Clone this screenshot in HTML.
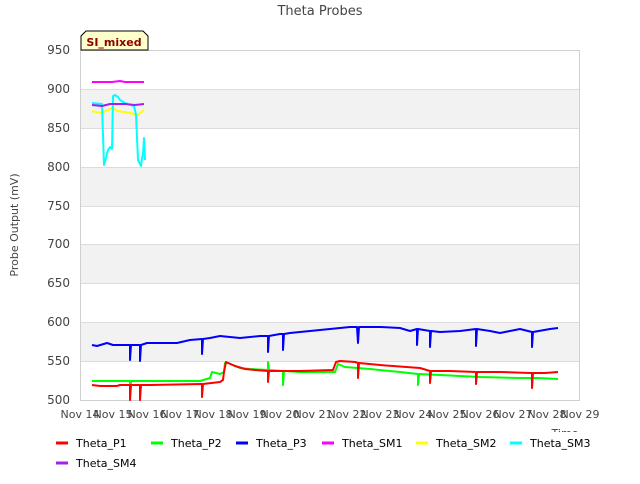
<!DOCTYPE html>
<html><head><meta charset="utf-8"><style>
body{margin:0;background:#fff;width:640px;height:480px;overflow:hidden;font-family:"DejaVu Sans","Liberation Sans",sans-serif;}
</style></head><body>
<svg width="640" height="480" xmlns="http://www.w3.org/2000/svg" font-family="DejaVu Sans, Liberation Sans, sans-serif">
<rect x="80" y="50" width="500" height="350" fill="#fff"/>
<rect x="80" y="89" width="500" height="39" fill="#f2f2f2"/>
<rect x="80" y="167" width="500" height="39" fill="#f2f2f2"/>
<rect x="80" y="244" width="500" height="39" fill="#f2f2f2"/>
<rect x="80" y="322" width="500" height="39" fill="#f2f2f2"/>
<g stroke="#dcdcdc" stroke-width="1">
<line x1="80" y1="89.5" x2="580" y2="89.5"/><line x1="80" y1="128.5" x2="580" y2="128.5"/>
<line x1="80" y1="167.5" x2="580" y2="167.5"/><line x1="80" y1="206.5" x2="580" y2="206.5"/>
<line x1="80" y1="244.5" x2="580" y2="244.5"/><line x1="80" y1="283.5" x2="580" y2="283.5"/>
<line x1="80" y1="322.5" x2="580" y2="322.5"/><line x1="80" y1="361.5" x2="580" y2="361.5"/>
</g>
<rect x="80.5" y="50.5" width="499" height="350" fill="none" stroke="#d0d0d0"/>
<text x="320" y="15" text-anchor="middle" font-size="13" fill="#444">Theta Probes</text>
<g font-size="12" fill="#444" text-anchor="end">
<text x="70" y="54">950</text><text x="70" y="93">900</text><text x="70" y="132">850</text><text x="70" y="171">800</text><text x="70" y="210">750</text><text x="70" y="248">700</text><text x="70" y="287">650</text><text x="70" y="326">600</text><text x="70" y="365">550</text><text x="70" y="404">500</text>
</g>
<text transform="translate(18,225) rotate(-90)" text-anchor="middle" font-size="11" fill="#444">Probe Output (mV)</text>
<g font-size="11" fill="#444" text-anchor="middle">
<text x="80" y="418">Nov 14</text><text x="113" y="418">Nov 15</text><text x="147" y="418">Nov 16</text><text x="180" y="418">Nov 17</text><text x="213" y="418">Nov 18</text><text x="247" y="418">Nov 19</text><text x="280" y="418">Nov 20</text><text x="313" y="418">Nov 21</text><text x="347" y="418">Nov 22</text><text x="380" y="418">Nov 23</text><text x="413" y="418">Nov 24</text><text x="447" y="418">Nov 25</text><text x="480" y="418">Nov 26</text><text x="513" y="418">Nov 27</text><text x="547" y="418">Nov 28</text><text x="580" y="418">Nov 29</text>
</g>
<text x="565" y="437" text-anchor="middle" font-size="11" fill="#444">Time</text>
<rect x="0" y="432" width="640" height="48" fill="#fff"/>
<g fill="none" stroke-width="2" stroke-linejoin="round">
<polyline stroke="#ff00ff" points="92,82 112,82 120,81 125,82 144,82"/>
<polyline stroke="#ffff00" points="92,111 100,113 106,111 112,108 118,111 130,113 138,115 144,110"/>
<polyline stroke="#00ffff" points="92,103 102,104 104,165 106,158 108,150 110,147 112,149 113,96 115,95 118,97 120,100 125,103 134,106 136,115 138,160 140,164 141,166 142,158 143,154 144,138 145,160"/>
<polyline stroke="#a020f0" points="92,105 102,106 110,104 125,104 135,105 144,104"/>
<polyline stroke="#0000ff" points="92,345 97,346 107,343 113,345 130,345 130,360 131,345 140,345 140,361 141,345 147,343 177,343 190,340 202,339 202,354 203,339 210,338 220,336 240,338 260,336 268,336 268,352 269,336 280,334 283,334 283,350 284,334 290,333 320,330 340,328 350,327 357,327 358,343 359,327 380,327 400,328 410,331 417,329 417,345 418,329 430,331 430,347 431,331 440,332 460,331 476,329 476,346 477,329 490,331 500,333 510,331 520,329 532,332 532,347 533,332 550,329 558,328"/>
<polyline stroke="#00ff00" points="92,381 130,381 130,396 131,381 200,381 210,378 212,372 220,374 224,372 225,363 228,363 240,368 250,369 268,370 268,362 269,370 283,371 283,385 284,371 300,372 335,372 338,364 345,367 370,369 400,372 418,374 418,385 419,374 440,375 480,377 520,378 538,378 558,379"/>
<polyline stroke="#ff0000" points="92,385 100,386 117,386 120,385 130,385 130,400 131,385 140,385 140,400 141,385 150,385 202,384 202,397 203,384 220,382 223,380 224,372 226,362 235,366 245,369 255,370 268,371 268,382 269,371 300,371 333,370 336,362 340,361 355,362 358,363 358,378 359,363 380,365 420,368 430,371 430,383 431,371 450,371 476,372 476,384 477,372 500,372 530,373 532,373 532,388 533,373 545,373 558,372"/>
</g>
<path d="M81,50 L81,36 L86,31 L143,31 L148,36 L148,50 Z" fill="#ffffcc" stroke="#000" stroke-width="1"/>
<text x="114" y="46" text-anchor="middle" font-size="11" font-weight="bold" fill="#8b0000">SI_mixed</text>
<g stroke-width="3">
<line x1="56" y1="443" x2="68" y2="443" stroke="#ff0000"/>
<line x1="151" y1="443" x2="163" y2="443" stroke="#00ff00"/>
<line x1="236" y1="443" x2="248" y2="443" stroke="#0000ff"/>
<line x1="322" y1="443" x2="334" y2="443" stroke="#ff00ff"/>
<line x1="416" y1="443" x2="428" y2="443" stroke="#ffff00"/>
<line x1="510" y1="443" x2="522" y2="443" stroke="#00ffff"/>
<line x1="56" y1="463" x2="68" y2="463" stroke="#a020f0"/>
</g>
<g font-size="11" fill="#000">
<text x="76" y="447">Theta_P1</text><text x="171" y="447">Theta_P2</text><text x="256" y="447">Theta_P3</text><text x="342" y="447">Theta_SM1</text><text x="436" y="447">Theta_SM2</text><text x="530" y="447">Theta_SM3</text><text x="76" y="467">Theta_SM4</text>
</g>
</svg>
</body></html>
